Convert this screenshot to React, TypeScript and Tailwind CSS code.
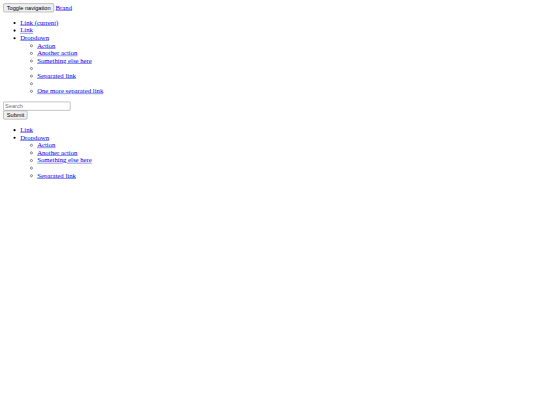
const link = "text-[#0000ee] underline";

function Sub({ items }: { items: (string | null)[] }) {
  return (
    <ul className="list-[circle] pl-10">
      {items.map((t, i) =>
        t ? (
          <li key={i}>
            <a href="#" className={link}>
              {t}
            </a>
          </li>
        ) : (
          <li key={i}>&nbsp;</li>
        )
      )}
    </ul>
  );
}

const btn =
  "bg-[#efefef] border border-[#767676] rounded-[3px] px-[7px] py-[2px] text-[13.33px] leading-[normal] text-black font-['Liberation_Sans',Arial,sans-serif]";

export default function App() {
  return (
    <div className="w-[540px] h-[405px] overflow-hidden bg-white">
      <div className="w-[1280px] origin-top-left scale-[0.421875] p-2 text-[16px] leading-[normal] text-black font-['Liberation_Serif','Times_New_Roman',serif]">
        <div>
          <button type="button" className={btn}>
            Toggle navigation
          </button>{" "}
          <a href="#" className={link}>
            Brand
          </a>
        </div>
        <ul className="list-disc pl-10 my-4">
          <li>
            <a href="#" className={link}>
              Link (current)
            </a>
          </li>
          <li>
            <a href="#" className={link}>
              Link
            </a>
          </li>
          <li>
            <a href="#" className={link}>
              Dropdown
            </a>
            <Sub
              items={[
                "Action",
                "Another action",
                "Something else here",
                null,
                "Separated link",
                null,
                "One more separated link",
              ]}
            />
          </li>
        </ul>
        <form>
          <div>
            <input
              type="text"
              placeholder="Search"
              className="w-[159px] h-[21px] bg-white border border-[#767676] rounded-[2px] px-[3px] py-[2px] text-[13.33px] placeholder:text-[#757575] font-['Liberation_Sans',Arial,sans-serif]"
            />
          </div>
          <button type="submit" className={btn}>
            Submit
          </button>
        </form>
        <ul className="list-disc pl-10 my-4">
          <li>
            <a href="#" className={link}>
              Link
            </a>
          </li>
          <li>
            <a href="#" className={link}>
              Dropdown
            </a>
            <Sub
              items={[
                "Action",
                "Another action",
                "Something else here",
                null,
                "Separated link",
              ]}
            />
          </li>
        </ul>
      </div>
    </div>
  );
}
